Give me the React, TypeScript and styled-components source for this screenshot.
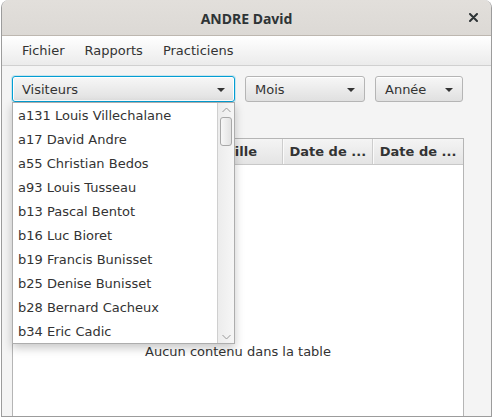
import React from "react";
import styled, { createGlobalStyle } from "styled-components";

const GlobalStyle = createGlobalStyle`
  html, body {
    margin: 0;
    padding: 0;
    background: #ffffff;
  }
  body {
    font-family: "DejaVu Sans", "Liberation Sans", sans-serif;
    font-size: 13px;
    color: #333333;
  }
`;

const visitors = [
  "a131 Louis Villechalane",
  "a17 David Andre",
  "a55 Christian Bedos",
  "a93 Louis Tusseau",
  "b13 Pascal Bentot",
  "b16 Luc Bioret",
  "b19 Francis Bunisset",
  "b25 Denise Bunisset",
  "b28 Bernard Cacheux",
  "b34 Eric Cadic",
];

// first header is hidden behind the open popup
const columns = [
  { label: "", width: 187 },
  { label: "Ville", width: 84 },
  { label: "Date de ...", width: 90 },
  { label: "Date de ...", width: 90 },
];

const Arrow = () => (
  <svg width="8" height="4" viewBox="0 0 8 4">
    <polygon points="0,0 8,0 4,4" fill="#333333" />
  </svg>
);

const Chevron = ({ up }: { up?: boolean }) => (
  <svg width="9" height="6" viewBox="0 0 9 6">
    <polyline
      points={up ? "0.5,5 4.5,1 8.5,5" : "0.5,1 4.5,5 8.5,1"}
      fill="none"
      stroke="#9a9a9a"
      strokeWidth="1"
    />
  </svg>
);

const App = () => {
  return (
    <>
      <GlobalStyle />
      <Window>
        <TitleBar>
          <Title>ANDRE David</Title>
          <CloseButton>
            <svg width="9" height="9" viewBox="0 0 9 9">
              <path d="M1 1 L8 8 M8 1 L1 8" stroke="#2e3436" strokeWidth="2" strokeLinecap="round" />
            </svg>
          </CloseButton>
        </TitleBar>
        <MenuBar>
          <MenuItem>Fichier</MenuItem>
          <MenuItem>Rapports</MenuItem>
          <MenuItem>Practiciens</MenuItem>
        </MenuBar>
        <Content>
          <FilterRow>
            <ComboHolder>
              <Combo $width={223} $focused>
                <span>Visiteurs</span>
                <Arrow />
              </Combo>
              <Popup>
                <List>
                  {visitors.map((v) => (
                    <ListItem key={v}>{v}</ListItem>
                  ))}
                </List>
                <ScrollBar>
                  <ScrollArrow>
                    <Chevron up />
                  </ScrollArrow>
                  <Thumb />
                  <Track />
                  <ScrollArrow>
                    <Chevron />
                  </ScrollArrow>
                </ScrollBar>
              </Popup>
            </ComboHolder>
            <Combo $width={120}>
              <span>Mois</span>
              <Arrow />
            </Combo>
            <Combo $width={88}>
              <span>Année</span>
              <Arrow />
            </Combo>
          </FilterRow>
          <Table>
            <Header>
              {columns.map((c, i) => (
                <HeaderCell key={i} $width={c.width}>
                  {c.label}
                </HeaderCell>
              ))}
            </Header>
            <TableBody>
              <Placeholder>Aucun contenu dans la table</Placeholder>
            </TableBody>
          </Table>
        </Content>
      </Window>
    </>
  );
};

const Window = styled.div`
  box-sizing: border-box;
  width: 491px;
  height: 417px;
  margin-left: 1px;
  display: flex;
  flex-direction: column;
  background: #f4f4f4;
  border: 1px solid #9c9c9c;
  border-top: none;
  border-radius: 8px 8px 0 0;
  overflow: hidden;
`;

const TitleBar = styled.div`
  box-sizing: border-box;
  height: 36px;
  flex-shrink: 0;
  display: flex;
  align-items: center;
  justify-content: center;
  position: relative;
  background: linear-gradient(#e2dfdb, #dcd9d5);
  border-bottom: 1px solid #bdb7b0;
  padding-top: 2px;
`;

const Title = styled.div`
  font-family: "Noto Sans", "DejaVu Sans", sans-serif;
  font-weight: 700;
  font-size: 14px;
  color: #2e3436;
`;

const CloseButton = styled.div`
  position: absolute;
  right: 13px;
  top: 13px;
  width: 9px;
  height: 9px;
  display: flex;
`;

const MenuBar = styled.div`
  box-sizing: border-box;
  height: 30px;
  flex-shrink: 0;
  display: flex;
  align-items: center;
  padding-left: 10px;
  background: linear-gradient(#ffffff, #ebebeb);
  border-bottom: 1px solid #d0d0d0;
`;

const MenuItem = styled.div`
  padding: 0 10px;
  color: #333333;
  line-height: 20px;
`;

const Content = styled.div`
  flex: 1;
  display: flex;
  flex-direction: column;
  padding: 10px 0 0 10px;
  min-height: 0;
`;

const FilterRow = styled.div`
  display: flex;
  gap: 10px;
  height: 26px;
`;

const ComboHolder = styled.div`
  position: relative;
  display: flex;
`;

const Combo = styled.div<{ $width: number; $focused?: boolean }>`
  box-sizing: border-box;
  width: ${(p) => p.$width}px;
  height: 26px;
  display: flex;
  align-items: center;
  justify-content: space-between;
  padding: 1px 9px 0 9px;
  border-radius: 3px;
  background: linear-gradient(#f7f7f7, #e0e0e0);
  border: 1px solid ${(p) => (p.$focused ? "#039ed3" : "#b5b5b5")};
  box-shadow: ${(p) =>
    p.$focused
      ? "inset 0 0 0 1px #ffffff, 0 0 0 1px rgba(3,158,211,0.18)"
      : "inset 0 1px 0 #ffffff"};
  color: #333333;
  span {
    line-height: 16px;
  }
`;

const Popup = styled.div`
  position: absolute;
  top: 26px;
  left: 0;
  width: 223px;
  height: 242px;
  box-sizing: border-box;
  display: flex;
  background: #ffffff;
  border: 1px solid #adadad;
  box-shadow: 0 4px 9px rgba(0, 0, 0, 0.22);
  z-index: 5;
`;

const List = styled.div`
  flex: 1;
  display: flex;
  flex-direction: column;
`;

const ListItem = styled.div`
  height: 24px;
  line-height: 25px;
  padding-left: 5px;
  color: #333333;
  white-space: nowrap;
`;

const ScrollBar = styled.div`
  width: 16px;
  display: flex;
  flex-direction: column;
  align-items: center;
  border-left: 1px solid #cfcfcf;
  background: linear-gradient(to right, #ececec, #f6f6f6);
`;

const ScrollArrow = styled.div`
  height: 13px;
  display: flex;
  align-items: center;
  justify-content: center;
`;

const Thumb = styled.div`
  box-sizing: border-box;
  width: 12px;
  height: 29px;
  margin-top: 1px;
  border: 1px solid #a8a8a8;
  border-radius: 3px;
  background: linear-gradient(to right, #f7f7f7, #e2e2e2);
`;

const Track = styled.div`
  flex: 1;
`;

const Table = styled.div`
  box-sizing: border-box;
  width: 452px;
  flex: 1;
  margin-top: 36px;
  display: flex;
  flex-direction: column;
  border: 1px solid #b5b5b5;
  border-bottom: none;
  background: #ffffff;
`;

const Header = styled.div`
  display: flex;
  height: 25px;
  border-bottom: 1px solid #c8c8c8;
  background: linear-gradient(#f4f4f4, #e4e4e4);
`;

const HeaderCell = styled.div<{ $width: number }>`
  box-sizing: border-box;
  width: ${(p) => p.$width}px;
  display: flex;
  align-items: center;
  justify-content: center;
  padding-bottom: 1px;
  font-weight: 700;
  color: #333333;
  border-right: 1px solid #cdcdcd;
  box-shadow: inset 1px 0 0 #fafafa;
  white-space: nowrap;
  overflow: hidden;
  &:last-child {
    border-right: none;
  }
`;

const TableBody = styled.div`
  flex: 1;
  display: flex;
  justify-content: center;
  padding-top: 179px;
`;

const Placeholder = styled.div`
  line-height: 16px;
  height: 16px;
  color: #333333;
`;

export default App;
